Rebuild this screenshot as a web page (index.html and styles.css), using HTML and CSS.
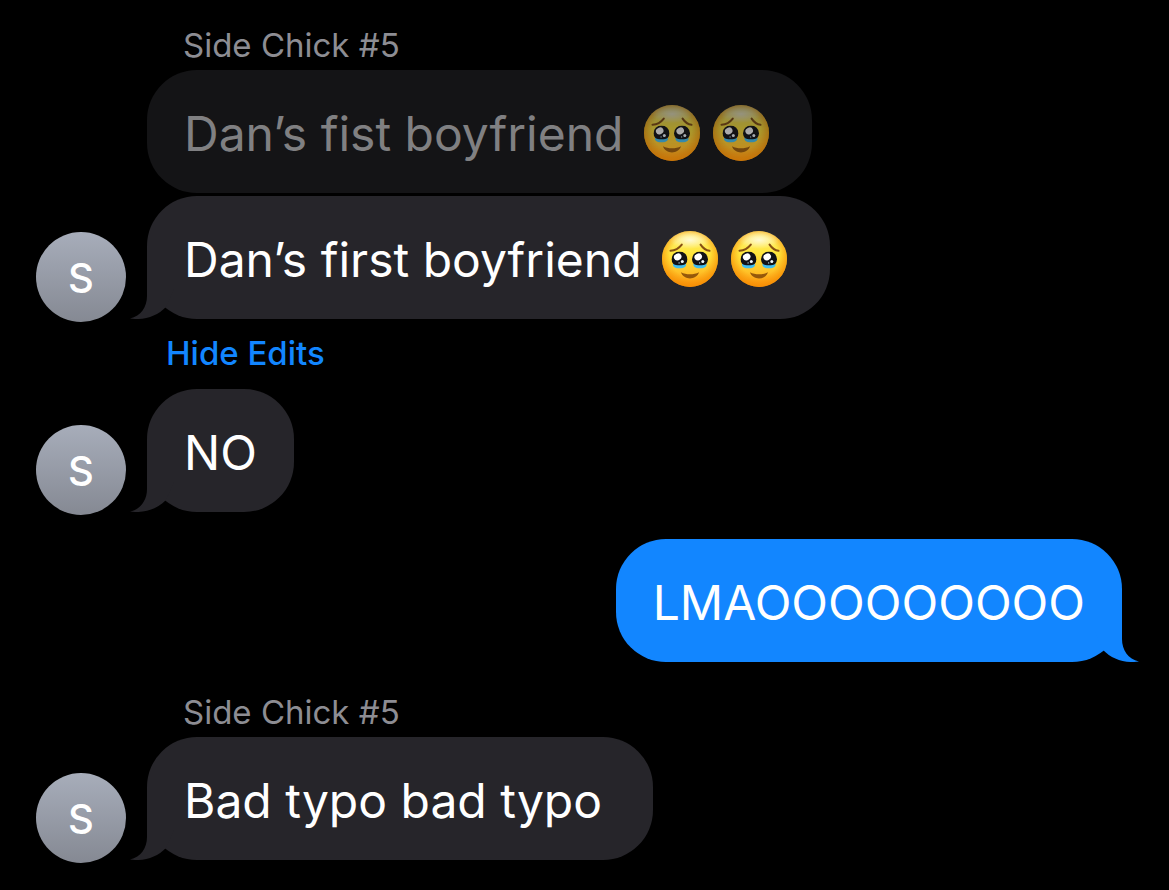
FILE: index.html
```
<!DOCTYPE html>
<html lang="en">
<head>
<meta charset="utf-8">
<meta name="viewport" content="width=device-width, initial-scale=1">
<title>Messages</title>
<link rel="stylesheet" href="styles.css">
</head>
<body>
<svg class="defs" aria-hidden="true">
  <defs>
    <linearGradient id="skin" x1="0" y1="0" x2="0" y2="1">
      <stop offset="0" stop-color="#fff07a"/>
      <stop offset="0.4" stop-color="#ffe63c"/>
      <stop offset="0.7" stop-color="#ffc62a"/>
      <stop offset="1" stop-color="#ff9a12"/>
    </linearGradient>
    <radialGradient id="rim" cx="0.5" cy="0.46" r="0.54">
      <stop offset="0.65" stop-color="#f58a00" stop-opacity="0"/>
      <stop offset="1" stop-color="#f58a00" stop-opacity="0.8"/>
    </radialGradient>
    <radialGradient id="shine" cx="0.5" cy="0.5" r="0.5">
      <stop offset="0" stop-color="#fffbe0" stop-opacity="0.9"/>
      <stop offset="1" stop-color="#fffbe0" stop-opacity="0"/>
    </radialGradient>
    <symbol id="eye" viewBox="0 0 16 17">
      <ellipse cx="8" cy="7.800" rx="8" ry="7.800" fill="#111216"/>
      <path d="M1.400 12.200C4.500 14.200 11.500 14.200 14.600 12.200C15 15.400 12 16.900 8 16.900S1 15.400 1.400 12.200Z" fill="#42bdee"/>
      <ellipse cx="6.200" cy="5.400" rx="3.900" ry="3.300" fill="#fff" transform="rotate(-25 6.200 5.400)"/>
      <circle cx="10.800" cy="10" r="1.500" fill="#f2faff"/>
      <circle cx="7.600" cy="11.400" r="0.700" fill="#b7d4e3"/>
    </symbol>
    <symbol id="tearful" viewBox="0 0 56 56">
      <circle cx="28" cy="28" r="28" fill="url(#skin)"/>
      <circle cx="28" cy="28" r="28" fill="url(#rim)"/>
      <ellipse cx="28" cy="9" rx="20" ry="9" fill="url(#shine)"/>
      <path d="M8.500 19.800C13 19.500 17 17.200 19.800 13.600M38.600 13.600C41 17.200 44 19.500 47.500 19.800" fill="none" stroke="#875012" stroke-width="2" stroke-linecap="round"/>
      <use href="#eye" x="9.500" y="20.500" width="16" height="17"/>
      <use href="#eye" x="30" y="20.500" width="16" height="17"/>
      <path d="M19 41.300C24 44 32 44 37 41.300C34.500 49.500 21.500 49.500 19 41.300Z" fill="#95580b"/>
    </symbol>
    <symbol id="tail" viewBox="0 0 50 50">
      <path d="M17 0V27C17 38 11 47 0 49.600C15 51.500 27 47 36 38L44 20V0Z"/>
    </symbol>
  </defs>
</svg>
<main class="thread">
  <section class="group">
    <h2 class="sender">Side Chick #5</h2>
    <div class="row">
      <p class="bubble bubble-previous">Dan’s fist boyfriend <svg class="emoji" role="img" aria-label="Face holding back tears"><use href="#tearful"/></svg><svg class="emoji" role="img" aria-label="Face holding back tears"><use href="#tearful"/></svg></p>
    </div>
    <div class="row">
      <span class="avatar">S</span>
      <p class="bubble">Dan’s first boyfriend <svg class="emoji" role="img" aria-label="Face holding back tears"><use href="#tearful"/></svg><svg class="emoji" role="img" aria-label="Face holding back tears"><use href="#tearful"/></svg><svg class="tail" aria-hidden="true"><use href="#tail"/></svg></p>
    </div>
    <button class="edits" type="button">Hide Edits</button>
    <div class="row">
      <span class="avatar">S</span>
      <p class="bubble">NO<svg class="tail" aria-hidden="true"><use href="#tail"/></svg></p>
    </div>
  </section>
  <section class="group group-sent">
    <div class="row row-sent">
      <p class="bubble bubble-sent">LMAOOOOOOOOO<svg class="tail tail-sent" aria-hidden="true"><use href="#tail"/></svg></p>
    </div>
  </section>
  <section class="group">
    <h2 class="sender">Side Chick #5</h2>
    <div class="row">
      <span class="avatar">S</span>
      <p class="bubble">Bad typo bad typo&nbsp;<svg class="tail" aria-hidden="true"><use href="#tail"/></svg></p>
    </div>
  </section>
</main>
</body>
</html>
```
FILE: styles.css
```
* {
  box-sizing: border-box;
}

body {
  margin: 0;
  background: #000;
  color: #fff;
  font-family: Inter, "Liberation Sans", sans-serif;
}

.defs {
  position: absolute;
  width: 0;
  height: 0;
}

.thread {
  display: flex;
  flex-direction: column;
  gap: 27px;
  padding: 22px 47px 27px 36px;
}

.group {
  display: flex;
  flex-direction: column;
  align-items: flex-start;
  gap: 3px;
}

.group-sent {
  align-items: flex-end;
}

.sender {
  margin: 0 0 -3px 147px;
  height: 48px;
  font-size: 33px;
  line-height: 46px;
  font-weight: 400;
  color: #8d8d93;
}

.row {
  display: flex;
  align-items: flex-end;
  gap: 21px;
  padding-left: 111px;
}

.row:has(.avatar),
.row-sent {
  padding-left: 0;
}

.avatar {
  flex: none;
  display: flex;
  align-items: center;
  justify-content: center;
  width: 90px;
  height: 90px;
  margin-bottom: -3px;
  padding-top: 2px;
  border-radius: 50%;
  background: linear-gradient(#a7adba, #858993);
  font-size: 40px;
  line-height: 48px;
  font-weight: 500;
}

.bubble {
  position: relative;
  margin: 0;
  padding: 34px 37px 29px;
  border-radius: 50px;
  background: #26252a;
  font-size: 48px;
  line-height: 60px;
}

.bubble-previous {
  background: #141416;
  color: #808082;
}

.bubble-sent {
  background: #1286ff;
}

.emoji {
  width: 56px;
  height: 56px;
  margin: -6px 6px -6px 7px;
  vertical-align: -4px;
}

.bubble-previous .emoji {
  mask-image: linear-gradient(rgb(0 0 0 / 0.5), rgb(0 0 0 / 0.8));
}

.tail {
  position: absolute;
  left: -17px;
  bottom: 0;
  width: 50px;
  height: 50px;
  fill: #26252a;
}

.tail-sent {
  left: auto;
  right: -17px;
  transform: scaleX(-1);
  fill: #1286ff;
}

.edits {
  height: 64px;
  margin-left: 130px;
  padding: 0 0 2px;
  border: 0;
  background: none;
  color: #1286ff;
  font: inherit;
  font-size: 33px;
  line-height: 62px;
  font-weight: 500;
  cursor: pointer;
}
```
